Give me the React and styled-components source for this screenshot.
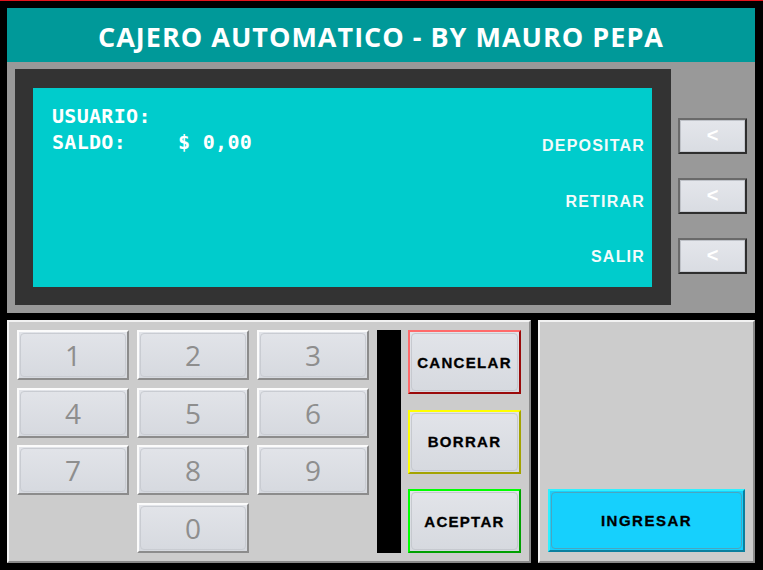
import React from "react";
import styled, { createGlobalStyle } from "styled-components";

const GlobalStyle = createGlobalStyle`
  html, body {
    margin: 0;
    padding: 0;
    background: #000;
  }
  * {
    box-sizing: border-box;
  }
`;

const TONES = {
  red: { light: "#ff6a6a", dark: "#9a0a0a" },
  yellow: { light: "#ffff00", dark: "#a3a300" },
  green: { light: "#00ff00", dark: "#00a000" },
};

const KEYS = ["1", "2", "3", "4", "5", "6", "7", "8", "9", "0"];

const App = () => {
  return (
    <>
      <GlobalStyle />
      <Window>
        <Header>CAJERO AUTOMATICO - BY MAURO PEPA</Header>

        <ScreenBand>
          <ScreenFrame>
            <Screen>
              <Info>
                <InfoRow>USUARIO:</InfoRow>
                <InfoRow>
                  SALDO:
                  <Amount>$ 0,00</Amount>
                </InfoRow>
              </Info>
              <Menu>
                <MenuLabel>DEPOSITAR</MenuLabel>
                <MenuLabel>RETIRAR</MenuLabel>
                <MenuLabel>SALIR</MenuLabel>
              </Menu>
            </Screen>
          </ScreenFrame>
          <SideButtons>
            <SideButton>&lt;</SideButton>
            <SideButton>&lt;</SideButton>
            <SideButton>&lt;</SideButton>
          </SideButtons>
        </ScreenBand>

        <Bottom>
          <KeypadPanel>
            <Keys>
              {KEYS.map((k) => (
                <Key key={k} zero={k === "0"}>
                  {k}
                </Key>
              ))}
            </Keys>
            <Divider />
            <Actions>
              <ActionButton tone="red">CANCELAR</ActionButton>
              <ActionButton tone="yellow">BORRAR</ActionButton>
              <ActionButton tone="green">ACEPTAR</ActionButton>
            </Actions>
          </KeypadPanel>
          <CardPanel>
            <IngresarButton>INGRESAR</IngresarButton>
          </CardPanel>
        </Bottom>
      </Window>
    </>
  );
};

export default App;

const Window = styled.div`
  width: 763px;
  height: 570px;
  background: #000;
  border-top: 1px solid #e2141c;
  padding: 7px 8px 7px 7px;
  display: flex;
  flex-direction: column;
`;

const Header = styled.div`
  height: 54px;
  background: #009999;
  color: #fff;
  font-family: "Open Sans", "Noto Sans", sans-serif;
  font-weight: 700;
  font-size: 27px;
  letter-spacing: 1px;
  display: flex;
  align-items: center;
  justify-content: center;
  padding-top: 3px;
`;

const ScreenBand = styled.div`
  height: 251px;
  background: #999999;
  display: flex;
  padding: 7px 0 0 8px;
`;

const ScreenFrame = styled.div`
  width: 656px;
  height: 236px;
  background: #333333;
  padding: 19px 19px 18px 18px;
`;

const Screen = styled.div`
  height: 100%;
  background: #00cccc;
  display: flex;
  justify-content: space-between;
  padding: 15px 7px 0 19px;
`;

const Info = styled.div`
  display: flex;
  flex-direction: column;
`;

const InfoRow = styled.div`
  font-family: "DejaVu Sans Mono", "Liberation Mono", monospace;
  font-weight: 700;
  font-size: 20px;
  line-height: 26px;
  letter-spacing: 0.3px;
  color: #fff;
  white-space: pre;
`;

const Amount = styled.span`
  margin-left: 52px;
`;

const Menu = styled.div`
  display: flex;
  flex-direction: column;
  align-items: flex-end;
  padding-top: 33px;
  gap: 35.5px;
`;

const MenuLabel = styled.div`
  font-family: "Liberation Sans", Arial, sans-serif;
  font-weight: 700;
  font-size: 16px;
  line-height: 20px;
  letter-spacing: 1.2px;
  color: #f4fbfb;
`;

const SideButtons = styled.div`
  display: flex;
  flex-direction: column;
  gap: 24px;
  margin-left: 7px;
  padding-top: 49px;
`;

const SideButton = styled.div`
  width: 69px;
  height: 36px;
  border: 2px solid;
  border-color: #6a6a6a #2e2e2e #2e2e2e #6a6a6a;
  background: linear-gradient(#e4e6eb, #d9dce2);
  box-shadow: inset 1px 1px 0 #bfc2c8, inset -1px -1px 0 #c4c7cd;
  border-radius: 1px;
  color: #fff;
  font-family: "Liberation Sans", Arial, sans-serif;
  font-weight: 700;
  font-size: 20px;
  display: flex;
  align-items: center;
  justify-content: center;
  padding-bottom: 2px;
`;

const Bottom = styled.div`
  height: 243px;
  margin-top: 7px;
  display: flex;
  gap: 7px;
`;

const Panel = styled.div`
  background: #cccccc;
  border: 2px solid;
  border-color: #f2f2f2 #8a8a8a #8a8a8a #f2f2f2;
  padding: 8px;
`;

const KeypadPanel = styled(Panel)`
  width: 524px;
  display: flex;
`;

const Keys = styled.div`
  display: grid;
  grid-template-columns: repeat(3, 112px);
  grid-auto-rows: 50px;
  column-gap: 8px;
  row-gap: 7.6px;
`;

const Key = styled.div`
  grid-column: ${({ zero }) => (zero ? "2" : "auto")};
  position: relative;
  border: 2px solid;
  border-color: #fbfbfb #8c8c8c #8c8c8c #fbfbfb;
  background: linear-gradient(#e2e4e9, #d6d9df);
  color: #8e8e8e;
  font-family: "Open Sans", "Noto Sans", sans-serif;
  font-size: 28px;
  display: flex;
  align-items: center;
  justify-content: center;

  &::before {
    content: "";
    position: absolute;
    inset: 1px;
    border: 1px solid #c9ccd2;
    border-radius: 4px;
  }
`;

const Divider = styled.div`
  width: 24px;
  margin-left: 8px;
  background: #000;
`;

const Actions = styled.div`
  width: 113px;
  margin-left: 7px;
  display: flex;
  flex-direction: column;
  justify-content: space-between;
`;

const ActionButton = styled.div`
  height: 64px;
  position: relative;
  border: 2px solid;
  border-color: ${({ tone }) =>
    `${TONES[tone].light} ${TONES[tone].dark} ${TONES[tone].dark} ${TONES[tone].light}`};
  background: linear-gradient(#e2e4e9, #d6d9df);
  color: #000;
  font-family: "Liberation Sans", Arial, sans-serif;
  font-weight: 700;
  font-size: 15px;
  letter-spacing: 1.3px;
  -webkit-text-stroke: 0.3px #000;
  display: flex;
  align-items: center;
  justify-content: center;

  &::before {
    content: "";
    position: absolute;
    inset: 1px;
    border: 1px solid #c6c9cf;
    border-radius: 4px;
  }
`;

const CardPanel = styled(Panel)`
  flex: 1;
  display: flex;
  align-items: flex-end;
`;

const IngresarButton = styled.div`
  width: 100%;
  height: 63px;
  margin-bottom: 1px;
  position: relative;
  border: 2px solid;
  border-color: #2ff0ff #0a7f9e #0a7f9e #2ff0ff;
  background: #16d0fd;
  color: #000;
  font-family: "Liberation Sans", Arial, sans-serif;
  font-weight: 700;
  font-size: 15px;
  letter-spacing: 1.5px;
  -webkit-text-stroke: 0.3px #000;
  display: flex;
  align-items: center;
  justify-content: center;

  &::before {
    content: "";
    position: absolute;
    inset: 1px;
    border: 1px solid #4aa6c0;
    border-radius: 4px;
  }
`;
